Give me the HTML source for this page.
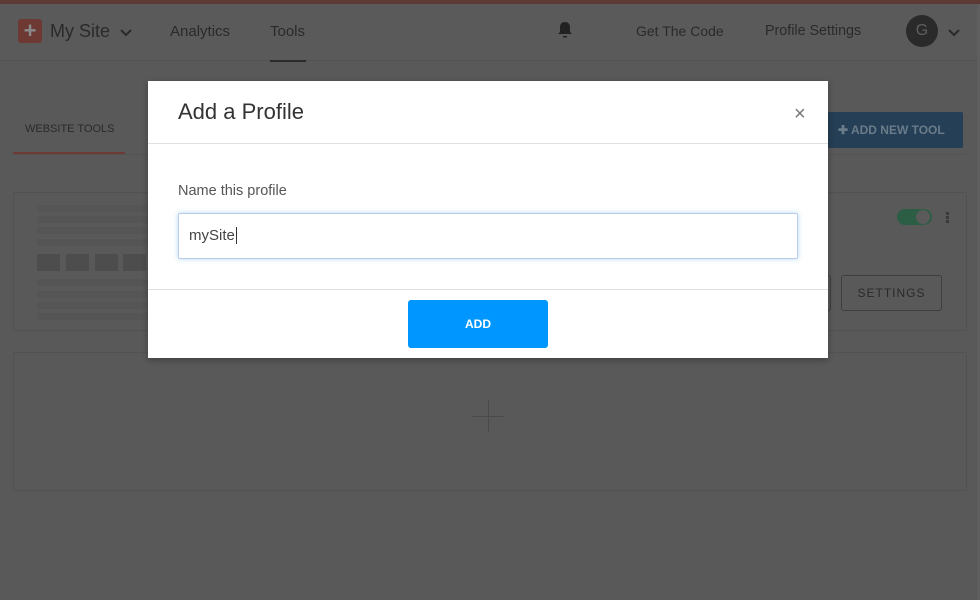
<!DOCTYPE html>
<html><head><meta charset="utf-8"><style>
*{box-sizing:border-box;margin:0;padding:0}
body{width:980px;height:600px;overflow:hidden;background:#595959;font-family:"Liberation Sans",sans-serif;position:relative}
.abs{position:absolute}
.topline{left:0;top:0;width:980px;height:4px;background:#5e3a36}
.nav{left:0;top:4px;width:980px;height:57px;background:#5a5a5a;border-bottom:1px solid #535353}
.t{position:absolute;color:#2a2a2a;font-size:15px}
.card{border:1px solid #525252;background:#595959}
.bar{position:absolute;background:#555;height:7px}
.sq{position:absolute;background:#4d4d4d;width:23px;height:17px;top:254px}
.modal{left:148px;top:81px;width:680px;height:277px;background:#fff;box-shadow:0 2px 6px rgba(0,0,0,.3)}
</style></head><body>
<div class="abs topline"></div>
<div class="abs nav">
  <div class="abs" style="left:18px;top:15px;width:24px;height:24px;background:#6e3833;border-radius:3px;color:#8a8a8a;font-size:22px;font-weight:bold;text-align:center;line-height:24px">+</div>
  <div class="t" style="left:50px;top:17px;font-size:18px">My Site</div>
  <svg class="abs" style="left:120px;top:25px" width="12" height="8"><path d="M1 1l5 5 5-5" stroke="#2a2a2a" stroke-width="2" fill="none"/></svg>
  <div class="t" style="left:170px;top:19px">Analytics</div>
  <div class="t" style="left:270px;top:19px">Tools</div>
  <div class="abs" style="left:270px;top:56px;width:36px;height:2px;background:#2a2a2a"></div>
  <svg class="abs" style="left:557px;top:17px" width="16" height="18"><path d="M8 1c-3 0-5 2-5 5v5l-2 2h14l-2-2V6c0-3-2-5-5-5z" fill="#222"/><rect x="6" y="15" width="4" height="1.5" fill="#222"/></svg>
  <div class="t" style="left:636px;top:19px;font-size:14px">Get The Code</div>
  <div class="t" style="left:765px;top:19px;font-size:14.3px">Profile Settings</div>
  <div class="abs" style="left:906px;top:11px;width:32px;height:32px;border-radius:50%;background:#2a2a2a;color:#5e5e5e;font-size:16px;text-align:center;line-height:32px">G</div>
  <svg class="abs" style="left:948px;top:25px" width="12" height="8"><path d="M1 1l5 5 5-5" stroke="#2a2a2a" stroke-width="2" fill="none"/></svg>
</div>
<div class="t" style="left:25px;top:123px;font-size:11px">WEBSITE TOOLS</div>
<div class="abs" style="left:13px;top:152px;width:112px;height:3px;background:#6e3a35"></div>
<div class="abs" style="left:13px;top:154px;width:954px;height:1px;background:#535353"></div>
<div class="abs" style="left:826px;top:112px;width:137px;height:36px;background:#253f56;border-radius:2px;color:#6a7b89;font-size:12px;line-height:36px;padding-left:12px;font-weight:bold">✚ ADD NEW TOOL</div>
<div class="abs card" style="left:13px;top:192px;width:954px;height:139px"></div>
<div class="bar" style="left:37px;top:205px;width:120px"></div>
<div class="bar" style="left:37px;top:216px;width:120px"></div>
<div class="bar" style="left:37px;top:227px;width:120px"></div>
<div class="bar" style="left:37px;top:239px;width:120px"></div>
<div class="sq" style="left:37px"></div><div class="sq" style="left:66px"></div><div class="sq" style="left:95px"></div><div class="sq" style="left:123px"></div>
<div class="bar" style="left:37px;top:279px;width:120px"></div>
<div class="bar" style="left:37px;top:291px;width:120px"></div>
<div class="bar" style="left:37px;top:302px;width:120px"></div>
<div class="bar" style="left:37px;top:313px;width:120px"></div>
<div class="abs" style="left:897px;top:209px;width:35px;height:16px;border-radius:8px;background:#2c5e46"></div>
<div class="abs" style="left:916px;top:210px;width:14px;height:14px;border-radius:50%;background:#5a5a5a"></div>
<div class="abs" style="left:946px;top:212px;width:3px;height:3px;background:#3a3a3a;box-shadow:0 4px #3a3a3a,0 8px #3a3a3a"></div>
<div class="abs" style="left:841px;top:275px;width:101px;height:36px;border:1px solid #3e3e3e;border-radius:3px;color:#2a2a2a;font-size:12px;letter-spacing:1px;text-align:center;line-height:34px">SETTINGS</div>
<div class="abs" style="left:780px;top:275px;width:51px;height:36px;border:1px solid #3e3e3e;border-radius:3px"></div>
<div class="abs card" style="left:13px;top:352px;width:954px;height:139px"></div>
<div class="abs" style="left:472px;top:416px;width:32px;height:1px;background:#4a4a4a"></div>
<div class="abs" style="left:488px;top:400px;width:1px;height:32px;background:#4a4a4a"></div>
<div class="abs" style="left:977px;top:4px;width:3px;height:596px;background:#5f5f5f"></div>
<div class="abs modal">
  <div class="abs" style="left:30px;top:18px;font-size:22px;color:#333">Add a Profile</div>
  <div class="abs" style="left:646px;top:22px;font-size:20px;color:#777">×</div>
  <div class="abs" style="left:0;top:62px;width:680px;height:1px;background:#e0e0e0"></div>
  <div class="abs" style="left:30px;top:102px;font-size:14.5px;color:#555">Name this profile</div>
  <div class="abs" style="left:30px;top:132px;width:620px;height:46px;border:1px solid #b9cde6;border-radius:2px;box-shadow:0 0 5px rgba(102,175,233,.5);font-size:15px;color:#444;padding:13px 10px">mySite<span style="border-left:1px solid #333;margin-left:1px"></span></div>
  <div class="abs" style="left:0;top:208px;width:680px;height:1px;background:#e0e0e0"></div>
  <div class="abs" style="left:260px;top:219px;width:140px;height:48px;background:#0096ff;border-radius:3px;color:#fff;font-size:12px;font-weight:bold;text-align:center;line-height:48px">ADD</div>
</div>
</body></html>
